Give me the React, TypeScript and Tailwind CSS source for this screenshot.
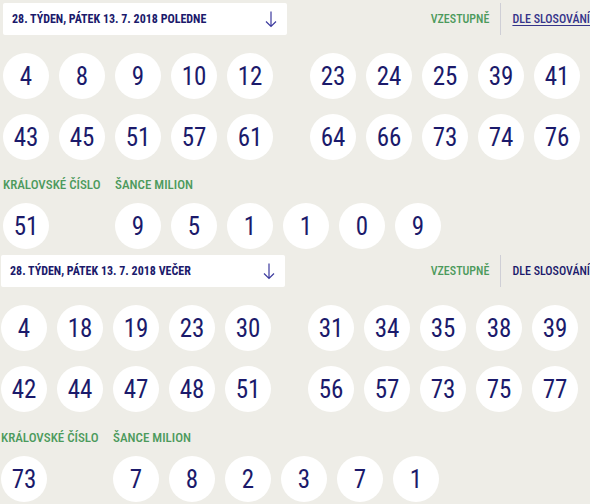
import React from "react";

const font = {
  fontFamily:
    '"Roboto Condensed", "Liberation Sans Narrow", "DejaVu Sans Condensed", Roboto, sans-serif',
};

type Draw = {
  title: string;
  pad: string;
  main: number[];
  king: number;
  chance: number[];
  underline: boolean;
  last?: boolean;
};

const draws: Draw[] = [
  {
    title: "28. TÝDEN, PÁTEK 13. 7. 2018 POLEDNE",
    pad: "pl-[3px] pt-[3px]",
    main: [4, 8, 9, 10, 12, 23, 24, 25, 39, 41, 43, 45, 51, 57, 61, 64, 66, 73, 74, 76],
    king: 51,
    chance: [9, 5, 1, 1, 0, 9],
    underline: true,
  },
  {
    title: "28. TÝDEN, PÁTEK 13. 7. 2018 VEČER",
    pad: "pl-[1px] mt-[6px]",
    main: [4, 18, 19, 23, 30, 31, 34, 35, 38, 39, 42, 44, 47, 48, 51, 56, 57, 73, 75, 77],
    king: 73,
    chance: [7, 8, 2, 3, 7, 1],
    underline: false,
    last: true,
  },
];

function Ball({ n }: { n: number }) {
  return (
    <div className="w-[46px] h-[46px] rounded-full bg-white flex items-center justify-center text-[25px] leading-none text-[#1b1a6b] font-stretch-condensed">
      {n}
    </div>
  );
}

function BallRow({ nums }: { nums: number[] }) {
  return (
    <div className="flex gap-[37px]">
      <div className="flex gap-[10px]">
        {nums.slice(0, 5).map((n, i) => (
          <Ball key={i} n={n} />
        ))}
      </div>
      <div className="flex gap-[10px]">
        {nums.slice(5, 10).map((n, i) => (
          <Ball key={i} n={n} />
        ))}
      </div>
    </div>
  );
}

function DrawBlock({ d }: { d: Draw }) {
  return (
    <div className={d.pad}>
      <div className="flex items-center h-[32px]">
        <div className="w-[284px] h-[32px] bg-white rounded-[2px] flex items-center justify-between pl-[9px] pr-[10px]">
          <span className="text-[12px] font-bold text-[#1b1a6b] font-stretch-condensed">
            {d.title}
          </span>
          <svg width="12" height="17" viewBox="0 0 12 17" fill="none">
            <path d="M6 0.5V15.5M1 10.5L6 15.5L11 10.5" stroke="#3c3a9e" strokeWidth="1.2" />
          </svg>
        </div>
        <div className="ml-auto flex items-center h-[32px] text-[12px] font-stretch-condensed">
          <span className="text-[#4c9a5c] font-medium">VZESTUPNĚ</span>
          <span className="w-px h-[32px] bg-[#cfcfd6] mx-[11px]" />
          <span
            className={
              d.underline
                ? "text-[#35348a] font-medium underline underline-offset-2 whitespace-nowrap"
                : "text-[#1b1a6b] font-medium whitespace-nowrap"
            }
          >
            DLE SLOSOVÁNÍ
          </span>
        </div>
      </div>
      <div className="mt-[18px]">
        <BallRow nums={d.main.slice(0, 10)} />
      </div>
      <div className="mt-[15px]">
        <BallRow nums={d.main.slice(10, 20)} />
      </div>
      <div className={(d.last ? "mt-[18px]" : "mt-[17px]") + " flex h-[16px] items-center text-[13px] text-[#4c9a5c] font-medium font-stretch-condensed"}>
        <span className="w-[112px]">KRÁLOVSKÉ ČÍSLO</span>
        <span>ŠANCE MILION</span>
      </div>
      <div className="mt-[10px] flex gap-[10px]">
        <Ball n={d.king} />
        <div className="w-[46px]" />
        {d.chance.map((n, i) => (
          <Ball key={i} n={n} />
        ))}
      </div>
    </div>
  );
}

export default function App() {
  return (
    <div className="w-[590px] h-[504px] overflow-hidden bg-[#eeede7]" style={font}>
      {draws.map((d, i) => (
        <DrawBlock key={i} d={d} />
      ))}
    </div>
  );
}
